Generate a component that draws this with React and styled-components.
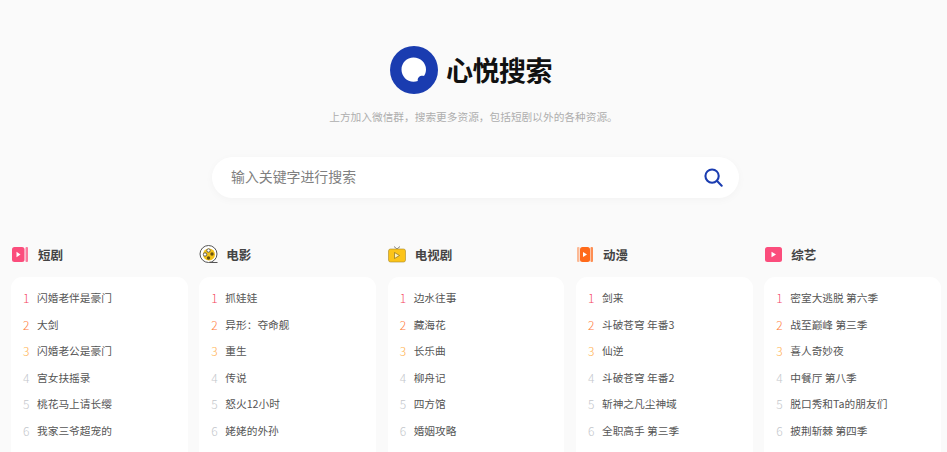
import React from "react"
import styled, { createGlobalStyle } from "styled-components"

const GlobalStyle = createGlobalStyle`
  html, body {
    margin: 0;
    padding: 0;
    height: 452px;
    overflow: hidden;
    background: #fafafa;
    font-family: "Noto Sans CJK SC", "Noto Sans", sans-serif;
  }
`

const Page = styled.div`
  width: 947px;
  height: 452px;
  overflow: hidden;
  display: flex;
  flex-direction: column;
  align-items: center;
  background: #fafafa;
`

const Brand = styled.div`
  display: flex;
  flex-shrink: 0;
  align-items: center;
  gap: 8px;
  margin: 46px 5px 0 0;
  height: 48px;
`

const BrandName = styled.h1`
  margin: 0;
  font-size: 27px;
  line-height: 48px;
  font-weight: 700;
  letter-spacing: -0.5px;
  color: #111;
`

const Tagline = styled.p`
  flex-shrink: 0;
  margin: 14px 0 0;
  font-size: 10.7px;
  line-height: 18px;
  color: #aeaeae;
`

const SearchBar = styled.div`
  flex-shrink: 0;
  width: 527px;
  height: 41px;
  margin: 31px 0 0 4px;
  padding: 0 16px 0 19px;
  box-sizing: border-box;
  display: flex;
  align-items: center;
  justify-content: space-between;
  background: #fff;
  border-radius: 21px;
  box-shadow: 0 2px 8px rgba(0, 0, 0, 0.03);
`

const Placeholder = styled.span`
  margin-top: -3px;
  font-size: 13.9px;
  color: #808080;
`

const Columns = styled.div`
  flex-shrink: 0;
  width: 100%;
  box-sizing: border-box;
  margin-top: 42px;
  padding: 0 6px 0 11px;
  display: grid;
  grid-template-columns: repeat(5, 1fr);
  column-gap: 11.6px;
`

const Heading = styled.div`
  display: flex;
  align-items: center;
  height: 28px;
  gap: 7px;
  margin-bottom: 9px;
`

const IconSlot = styled.span`
  display: flex;
  align-items: center;
  justify-content: center;
  width: 21px;
  height: 20px;
  margin-left: -1px;
`

const Title = styled.h2`
  margin: 0;
  font-size: 12.5px;
  font-weight: 700;
  color: #444;
`

const Card = styled.ol`
  list-style: none;
  margin: 0;
  padding: 8.3px 12px 30px;
  background: #fff;
  border-radius: 11px;
`

const Row = styled.li`
  display: flex;
  align-items: center;
  box-sizing: border-box;
  height: 26.6px;
  padding-bottom: 2px;
  font-size: 10.7px;
  color: #555;
  white-space: nowrap;
`

const Rank = styled.span`
  flex: 0 0 14px;
  font-size: 12px;
  font-weight: 300;
  color: ${(p) => p.$color};
`

const rankColor = (i, first) =>
  i === 0 ? first : i === 1 ? "#ff7d3c" : i === 2 ? "#ffb14e" : "#c4c7cc"

const LogoMark = () => (
  <svg width="48" height="48" viewBox="0 0 48 48">
    <circle cx="24" cy="24" r="24" fill="#1a3cb0" />
    <path
      d="M23.5 11.5C30.5 11.500 36 17 36 23.500C36 26 35.300 28.200 34 30C32 29.600 30 30 28.800 31.300C27.800 32.400 27.500 33.700 27.800 35C26.500 35.500 25 35.700 23.500 35.700C16.800 35.700 11.500 30.300 11.500 23.500C11.500 17 16.800 11.500 23.500 11.500Z"
      fill="#fff"
    />
  </svg>
)

const SearchIcon = () => (
  <svg width="19" height="19" viewBox="0 0 20 20" fill="none" stroke="#1a3cb0" strokeWidth="2.200" strokeLinecap="round">
    <circle cx="8.500" cy="8.500" r="7" />
    <path d="M13.800 13.800L18.600 18.600" />
  </svg>
)

const PlayTile = ({ fill, side }) => (
  <svg width="17" height="17" viewBox="0 0 17 17">
    {side === "right" || side === "both" ? <rect x="13.500" y="1" width="2.500" height="15" rx="1" fill={fill} opacity="0.75" /> : null}
    {side === "both" ? <rect x="0" y="1" width="2.500" height="15" rx="1" fill={fill} opacity="0.45" /> : null}
    <rect x={side === "both" ? 3 : 0} y="1" width={side === "none" ? 17 : side === "both" ? 10 : 12.5} height="15" rx="2.500" fill={fill} />
    <path d={side === "none" ? "M6.500 5.800L11 8.500L6.500 11.200Z" : side === "both" ? "M6 6L10 8.500L6 11Z" : "M4.500 5.800L8.500 8.500L4.500 11.200Z"} fill="#fff" />
  </svg>
)

const FilmIcon = () => (
  <svg width="20" height="20" viewBox="0 0 20 20">
    <circle cx="9.500" cy="10" r="8.500" fill="#fff" stroke="#555" strokeWidth="1" />
    <circle cx="10" cy="10.500" r="6" fill="#f2c21a" />
    <circle cx="9.500" cy="6.500" r="1.700" fill="#fff" stroke="#444" strokeWidth="0.800" />
    <circle cx="6" cy="10.500" r="1.700" fill="#fff" stroke="#444" strokeWidth="0.800" />
    <circle cx="13" cy="10" r="1.700" fill="#6a5310" />
    <circle cx="9.500" cy="14" r="1.700" fill="#6a5310" />
    <path d="M10.500 18.500H18.500" stroke="#555" strokeWidth="1" />
  </svg>
)

const TvIcon = () => (
  <svg width="18" height="18" viewBox="0 0 18 18">
    <path d="M6 1.500L9 4L12 1.500" fill="none" stroke="#777" strokeWidth="0.900" />
    <rect x="0.500" y="4" width="17" height="13" rx="2" fill="#fcc419" stroke="#a98a2a" strokeWidth="0.600" />
    <path d="M6.500 7.500L11.500 10.500L6.500 13.500Z" fill="#fff3c4" stroke="#8a6f1a" strokeWidth="0.700" />
  </svg>
)

const columns = [
  {
    title: "短剧",
    icon: <PlayTile fill="#fb4d7c" side="right" />,
    first: "#f5475f",
    items: ["闪婚老伴是豪门", "大剑", "闪婚老公是豪门", "宫女扶摇录", "桃花马上请长缨", "我家三爷超宠的"],
  },
  {
    title: "电影",
    icon: <FilmIcon />,
    first: "#f5475f",
    items: ["抓娃娃", "异形\uFF1A夺命舰", "重生", "传说", "怒火12小时", "姥姥的外孙"],
  },
  {
    title: "电视剧",
    icon: <TvIcon />,
    first: "#f5475f",
    items: ["边水往事", "藏海花", "长乐曲", "柳舟记", "四方馆", "婚姻攻略"],
  },
  {
    title: "动漫",
    icon: <PlayTile fill="#ff6a1a" side="both" />,
    first: "#f5475f",
    items: ["剑来", "斗破苍穹 年番3", "仙逆", "斗破苍穹 年番2", "斩神之凡尘神域", "全职高手 第三季"],
  },
  {
    title: "综艺",
    icon: <PlayTile fill="#fb4d7c" side="none" />,
    first: "#f5476f",
    items: ["密室大逃脱 第六季", "战至巅峰 第三季", "喜人奇妙夜", "中餐厅 第八季", "脱口秀和Ta的朋友们", "披荆斩棘 第四季"],
  },
]

const App = () => {
  return (
    <Page>
      <GlobalStyle />
      <Brand>
        <LogoMark />
        <BrandName>心悦搜索</BrandName>
      </Brand>
      <Tagline>{"上方加入微信群\uFF0C搜索更多资源\uFF0C包括短剧以外的各种资源。"}</Tagline>
      <SearchBar>
        <Placeholder>输入关键字进行搜索</Placeholder>
        <SearchIcon />
      </SearchBar>
      <Columns>
        {columns.map((col) => (
          <section key={col.title}>
            <Heading>
              <IconSlot>{col.icon}</IconSlot>
              <Title>{col.title}</Title>
            </Heading>
            <Card>
              {col.items.map((item, i) => (
                <Row key={item}>
                  <Rank $color={rankColor(i, col.first)}>{i + 1}</Rank>
                  {item}
                </Row>
              ))}
            </Card>
          </section>
        ))}
      </Columns>
    </Page>
  )
}

export default App
